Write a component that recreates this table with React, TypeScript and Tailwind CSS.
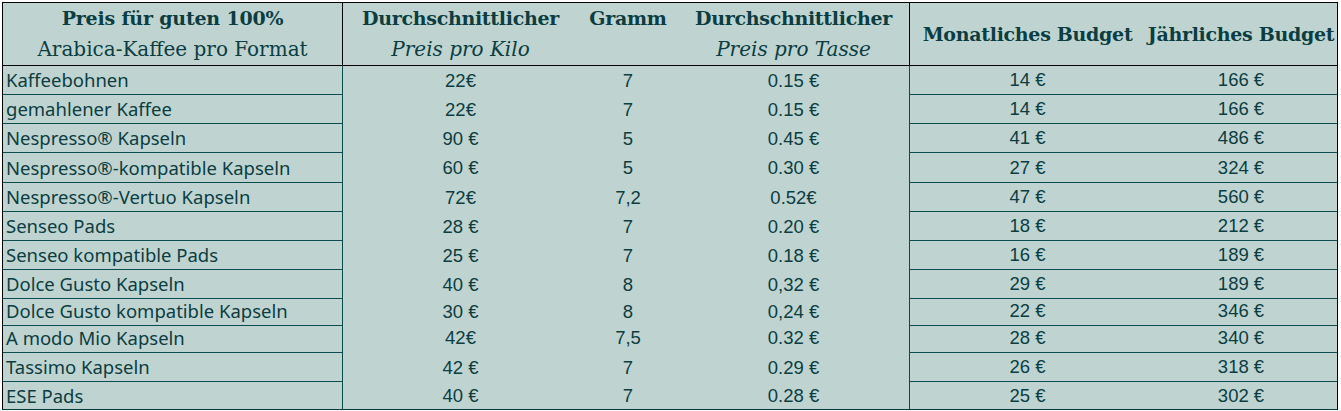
const rows = [
  { name: 'Kaffeebohnen', kilo: '22€', gramm: '7', tasse: '0.15 €', month: '14 €', year: '166 €', h: 'h-[29px]' },
  { name: 'gemahlener Kaffee', kilo: '22€', gramm: '7', tasse: '0.15 €', month: '14 €', year: '166 €', h: 'h-[29px]' },
  { name: 'Nespresso® Kapseln', kilo: '90 €', gramm: '5', tasse: '0.45 €', month: '41 €', year: '486 €', h: 'h-[29px]' },
  { name: 'Nespresso®-kompatible Kapseln', kilo: '60 €', gramm: '5', tasse: '0.30 €', month: '27 €', year: '324 €', h: 'h-[30px]' },
  { name: 'Nespresso®-Vertuo Kapseln', kilo: '72€', gramm: '7,2', tasse: '0.52€', month: '47 €', year: '560 €', h: 'h-[29px]' },
  { name: 'Senseo Pads', kilo: '28 €', gramm: '7', tasse: '0.20 €', month: '18 €', year: '212 €', h: 'h-[29px]' },
  { name: 'Senseo kompatible Pads', kilo: '25 €', gramm: '7', tasse: '0.18 €', month: '16 €', year: '189 €', h: 'h-[29px]' },
  { name: 'Dolce Gusto Kapseln', kilo: '40 €', gramm: '8', tasse: '0,32 €', month: '29 €', year: '189 €', h: 'h-[27px]' },
  { name: 'Dolce Gusto kompatible Kapseln', kilo: '30 €', gramm: '8', tasse: '0,24 €', month: '22 €', year: '346 €', h: 'h-[26px]' },
  { name: 'A modo Mio Kapseln', kilo: '42€', gramm: '7,5', tasse: '0.32 €', month: '28 €', year: '340 €', h: 'h-[30px]' },
  { name: 'Tassimo Kapseln', kilo: '42 €', gramm: '7', tasse: '0.29 €', month: '26 €', year: '318 €', h: 'h-[29px]' },
  { name: 'ESE Pads', kilo: '40 €', gramm: '7', tasse: '0.28 €', month: '25 €', year: '302 €', h: 'h-[27px]' },
];

const serif = "font-['DejaVu_Serif',serif]";
const num = "font-['Liberation_Sans',Arial,sans-serif] text-[18.5px]";

export default function App() {
  return (
    <div className="bg-white w-[1341px] h-[411px] pt-[2px] pl-[2px]">
      <div className="w-[1336px] border border-black border-b-[#0b3a3e] bg-[#bfd4d1] text-[#0b3d41]">
        {/* header */}
        <div className={`grid grid-cols-[340px_235px_100px_232px_235px_192px] h-[63px] border-b border-black ${serif}`}>
          <div className="border-r border-black flex flex-col items-center leading-[31px]">
            <span className="font-bold text-[19px] tracking-[-0.2px]">Preis für guten 100%</span>
            <span className="text-[20px]">Arabica-Kaffee pro Format</span>
          </div>
          <div className="flex flex-col items-center leading-[31px]">
            <span className="font-bold text-[19px] tracking-[-0.3px] whitespace-nowrap">Durchschnittlicher</span>
            <span className="italic text-[20px]">Preis pro Kilo</span>
          </div>
          <div className="flex flex-col items-center leading-[31px]">
            <span className="font-bold text-[19px] tracking-[-0.3px]">Gramm</span>
          </div>
          <div className="border-r border-black flex flex-col items-center leading-[31px]">
            <span className="font-bold text-[19px] tracking-[-0.3px] whitespace-nowrap">Durchschnittlicher</span>
            <span className="italic text-[20px]">Preis pro Tasse</span>
          </div>
          <div className="flex items-center justify-center text-[19px] font-bold tracking-[-0.3px] whitespace-nowrap">
            Monatliches Budget
          </div>
          <div className="flex items-center justify-center text-[19px] font-bold tracking-[-0.3px] whitespace-nowrap">
            Jährliches Budget
          </div>
        </div>
        {/* body */}
        {rows.map((r, i) => {
          const last = i === rows.length - 1;
          const line = last ? '' : 'border-b border-[#0b4a4f]';
          return (
            <div key={r.name} className={`grid grid-cols-[340px_235px_100px_232px_235px_192px] ${r.h}`}>
              <div className={`border-r border-r-[#0b4a4f] ${line} flex items-center pl-[3px] font-['Noto_Sans',sans-serif] text-[18.5px] whitespace-nowrap`}>
                {r.name}
              </div>
              <div className={`flex items-center justify-center ${num}`}>{r.kilo}</div>
              <div className={`flex items-center justify-center ${num}`}>{r.gramm}</div>
              <div className={`border-r border-r-[#0b4a4f] flex items-center justify-center ${num}`}>{r.tasse}</div>
              <div className={`${line} flex items-center justify-center ${num}`}>{r.month}</div>
              <div className={`${line} flex items-center justify-center ${num}`}>{r.year}</div>
            </div>
          );
        })}
      </div>
    </div>
  );
}
